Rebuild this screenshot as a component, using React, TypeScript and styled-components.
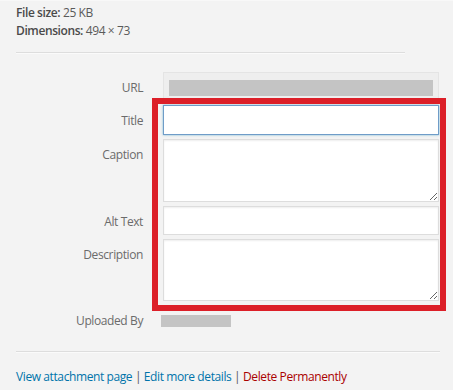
import React from "react";
import styled, { createGlobalStyle } from "styled-components";

const GlobalStyle = createGlobalStyle`
  html, body {
    margin: 0;
    background: #f3f3f3;
  }
  body {
    font-family: "Open Sans", "Noto Sans", sans-serif;
    font-size: 12px;
    letter-spacing: -0.4px;
    color: #666;
  }
`;

const Sidebar = styled.div`
  width: 453px;
  height: 390px;
  box-sizing: border-box;
  padding: 3px 0 0 16px;
  border-top: 1px solid #f8f8f8;
  overflow: hidden;
`;

const Details = styled.div`
  line-height: 18px;
  color: #5a5a5a;
`;

const DetailLine = styled.div`
  strong {
    font-weight: 600;
    color: #4a4a4a;
  }
`;

const Divider = styled.hr<{ $width: number; $top: number }>`
  width: ${(p) => p.$width}px;
  margin: ${(p) => p.$top}px 0 0;
  border: 0;
  border-top: 1px solid #ddd;
  border-bottom: 1px solid #fafafa;
`;

const Settings = styled.div`
  margin-top: 18px;
  display: flex;
  flex-direction: column;
  gap: 4px;
`;

const Row = styled.label`
  display: grid;
  grid-template-columns: 127px 276px;
  column-gap: 20px;
  align-items: start;
`;

const Label = styled.span`
  text-align: right;
  line-height: 18px;
  padding-top: 7px;
  color: #6b6b6b;
`;

const Field = styled.input<{ $focused?: boolean; $height: number }>`
  box-sizing: border-box;
  width: 100%;
  height: ${(p) => p.$height}px;
  margin: 0;
  padding: 3px 6px;
  font: inherit;
  background: #fff;
  border: 1px solid ${(p) => (p.$focused ? "#6f9cc8" : "#ddd")};
  box-shadow: ${(p) =>
    p.$focused
      ? "0 0 2px rgba(30, 140, 190, 0.6)"
      : "inset 0 1px 2px rgba(0, 0, 0, 0.07)"};
  outline: none;
`;

const Area = styled.textarea<{ $height: number }>`
  box-sizing: border-box;
  display: block;
  width: 100%;
  height: ${(p) => p.$height}px;
  margin: 0;
  padding: 3px 6px;
  font: inherit;
  background: #fff;
  border: 1px solid #ddd;
  box-shadow: inset 0 1px 2px rgba(0, 0, 0, 0.07);
  resize: vertical;
  outline: none;
`;

const ReadonlyBox = styled.div`
  box-sizing: border-box;
  height: 29px;
  padding: 7px 5px 0;
  background: #eeeeee;
  border: 1px solid #e4e4e4;
`;

const Redacted = styled.div<{ $width?: number }>`
  height: ${(p) => (p.$width ? 12 : 16)}px;
  width: ${(p) => (p.$width ? `${p.$width}px` : "100%")};
  background: #c4c4c4;
`;

const HighlightGroup = styled.div`
  position: relative;
  display: flex;
  flex-direction: column;
  gap: 4px;
`;

const HighlightFrame = styled.div`
  position: absolute;
  left: 136px;
  top: -7px;
  width: 294px;
  bottom: -10px;
  box-sizing: border-box;
  border: 6px solid #dc1f28;
  pointer-events: none;
`;

const UploadedRow = styled.div`
  display: grid;
  grid-template-columns: 127px auto;
  column-gap: 18px;
  align-items: center;
  margin-top: 7px;
  line-height: 18px;
`;

const UploadedLabel = styled.span`
  text-align: right;
  color: #6b6b6b;
`;

const Actions = styled.div`
  margin-top: 15px;
  line-height: 18px;
  color: #555;
`;

const ActionLink = styled.a<{ $danger?: boolean }>`
  color: ${(p) => (p.$danger ? "#a00" : "#0073aa")};
  text-decoration: none;
`;

export default function App() {
  return (
    <>
      <GlobalStyle />
      <Sidebar>
        <Details>
          <DetailLine>
            <strong>File size:</strong> 25 KB
          </DetailLine>
          <DetailLine>
            <strong>Dimensions:</strong> 494 × 73
          </DetailLine>
        </Details>
        <Divider $width={389} $top={12} />
        <Settings>
          <Row>
            <Label>URL</Label>
            <ReadonlyBox>
              <Redacted />
            </ReadonlyBox>
          </Row>
          <HighlightGroup>
            <Row>
              <Label>Title</Label>
              <Field $focused $height={30} />
            </Row>
            <Row>
              <Label>Caption</Label>
              <Area $height={63} />
            </Row>
            <Row>
              <Label>Alt Text</Label>
              <Field $height={29} />
            </Row>
            <Row>
              <Label>Description</Label>
              <Area $height={62} />
            </Row>
            <HighlightFrame />
          </HighlightGroup>
          <UploadedRow>
            <UploadedLabel>Uploaded By</UploadedLabel>
            <Redacted $width={70} />
          </UploadedRow>
        </Settings>
        <Divider $width={424} $top={21} />
        <Actions>
          <ActionLink href="#">View attachment page</ActionLink> |{" "}
          <ActionLink href="#">Edit more details</ActionLink> |{" "}
          <ActionLink href="#" $danger>
            Delete Permanently
          </ActionLink>
        </Actions>
      </Sidebar>
    </>
  );
}
